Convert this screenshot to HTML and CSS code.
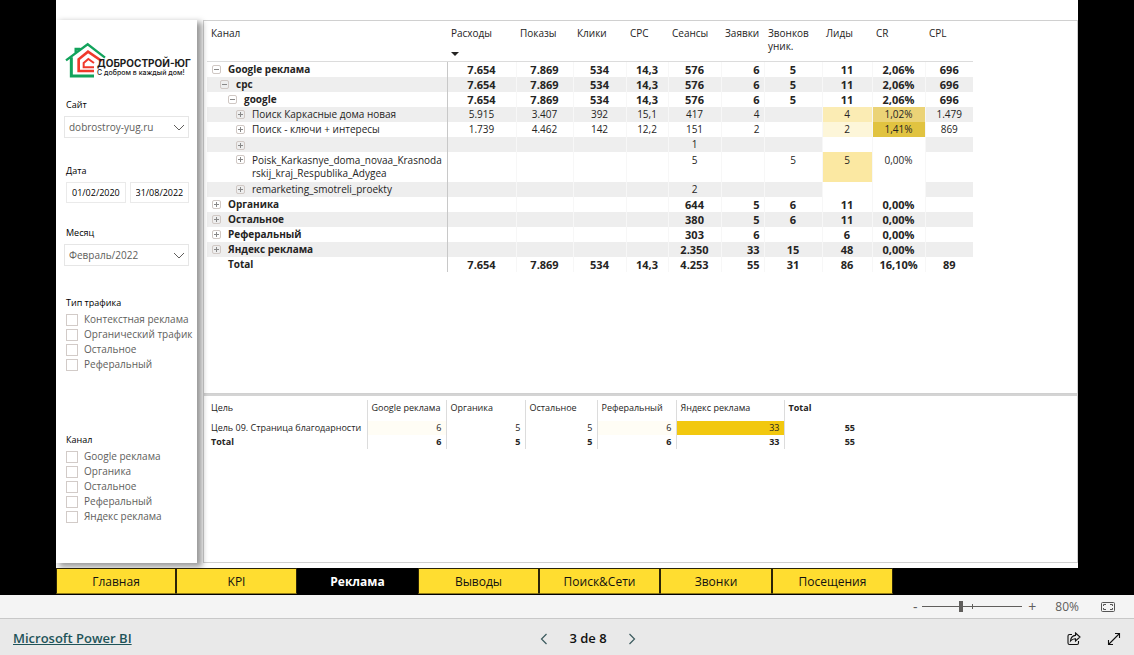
FILE: index.html
```html
<!DOCTYPE html>
<html lang="ru">
<head>
<meta charset="utf-8">
<title>Microsoft Power BI</title>
<link rel="stylesheet" href="styles.css">
</head>
<body>
<main class="stage">
  <div class="report">
    <div class="board">
      <aside class="sidebar">
        <div class="logo">
          <svg class="logo-mark" viewBox="28 124 126 108" aria-hidden="true">
            <g fill="none" stroke-width="7">
              <path stroke="#12a35c" d="M31 179 96 131 148 171M60 156V145H74"/>
              <path stroke="#12a35c" stroke-width="9" d="M47 170V226H115"/>
              <path stroke="#f0392b" stroke-width="8" d="M138 181 97 153 69 176V211H115"/>
              <path stroke="#f0392b" stroke-width="6" d="M115 187 98 175 84 187V200H115"/>
            </g>
          </svg>
          <div class="logo-words">
            <strong class="logo-name">ДОБРОСТРОЙ-ЮГ</strong>
            <span class="logo-line">С добром в каждый дом!</span>
          </div>
        </div>

        <div class="slicer slicer-site">
          <label class="slicer-label" for="site">Сайт</label>
          <select class="picker" id="site"><option>dobrostroy-yug.ru</option></select>
        </div>

        <div class="slicer slicer-date">
          <label class="slicer-label" for="from">Дата</label>
          <div class="dates">
            <input class="date" id="from" type="text" value="01/02/2020">
            <input class="date" id="to" type="text" value="31/08/2022" aria-label="Дата, конец">
          </div>
        </div>

        <div class="slicer slicer-month">
          <label class="slicer-label" for="month">Месяц</label>
          <select class="picker" id="month"><option>Февраль/2022</option></select>
        </div>

        <fieldset class="slicer slicer-traffic">
          <legend class="slicer-label">Тип трафика</legend>
          <label class="choice"><input type="checkbox">Контекстная реклама</label>
          <label class="choice"><input type="checkbox">Органический трафик</label>
          <label class="choice"><input type="checkbox">Остальное</label>
          <label class="choice"><input type="checkbox">Реферальный</label>
        </fieldset>

        <fieldset class="slicer slicer-channel">
          <legend class="slicer-label">Канал</legend>
          <label class="choice"><input type="checkbox">Google реклама</label>
          <label class="choice"><input type="checkbox">Органика</label>
          <label class="choice"><input type="checkbox">Остальное</label>
          <label class="choice"><input type="checkbox">Реферальный</label>
          <label class="choice"><input type="checkbox">Яндекс реклама</label>
        </fieldset>
      </aside>

      <div class="panels">
        <section class="panel panel-main">
          <table class="matrix">
            <colgroup>
              <col class="w-name"><col class="w-cost"><col class="w-shows"><col class="w-clicks"><col class="w-cpc"><col class="w-visits"><col class="w-orders"><col class="w-calls"><col class="w-leads"><col class="w-cr"><col class="w-cpl">
            </colgroup>
            <thead>
              <tr><th>Канал</th><th><span class="sorted">Расходы</span></th><th>Показы</th><th>Клики</th><th>CPC</th><th>Сеансы</th><th>Заявки</th><th>Звонков уник.</th><th>Лиды</th><th>CR</th><th>CPL</th></tr>
            </thead>
            <tbody>
              <tr class="bold"><th><div class="node"><button class="toggle minus" aria-label="Свернуть"></button><span>Google реклама</span></div></th><td>7.654</td><td>7.869</td><td>534</td><td>14,3</td><td>576</td><td>6</td><td>5</td><td>11</td><td>2,06%</td><td>696</td></tr>
              <tr class="bold"><th><div class="node l1"><button class="toggle minus" aria-label="Свернуть"></button><span>cpc</span></div></th><td>7.654</td><td>7.869</td><td>534</td><td>14,3</td><td>576</td><td>6</td><td>5</td><td>11</td><td>2,06%</td><td>696</td></tr>
              <tr class="bold"><th><div class="node l2"><button class="toggle minus" aria-label="Свернуть"></button><span>google</span></div></th><td>7.654</td><td>7.869</td><td>534</td><td>14,3</td><td>576</td><td>6</td><td>5</td><td>11</td><td>2,06%</td><td>696</td></tr>
              <tr><th><div class="node l3"><button class="toggle" aria-label="Развернуть"></button><span>Поиск Каркасные дома новая</span></div></th><td>5.915</td><td>3.407</td><td>392</td><td>15,1</td><td>417</td><td>4</td><td></td><td class="heat-2">4</td><td class="heat-4">1,02%</td><td>1.479</td></tr>
              <tr><th><div class="node l3"><button class="toggle" aria-label="Развернуть"></button><span>Поиск - ключи + интересы</span></div></th><td>1.739</td><td>4.462</td><td>142</td><td>12,2</td><td>151</td><td>2</td><td></td><td class="heat-1">2</td><td class="heat-5">1,41%</td><td>869</td></tr>
              <tr><th><div class="node l3"><button class="toggle" aria-label="Развернуть"></button></div></th><td></td><td></td><td></td><td></td><td>1</td><td></td><td></td><td class="heat-0"></td><td class="heat-0"></td><td></td></tr>
              <tr class="tall"><th><div class="node l3"><button class="toggle" aria-label="Развернуть"></button><span>Poisk_Karkasnye_doma_novaa_Krasnoda<br>rskij_kraj_Respublika_Adygea</span></div></th><td></td><td></td><td></td><td></td><td>5</td><td></td><td>5</td><td class="heat-3">5</td><td>0,00%</td><td></td></tr>
              <tr><th><div class="node l3"><button class="toggle" aria-label="Развернуть"></button><span>remarketing_smotreli_proekty</span></div></th><td></td><td></td><td></td><td></td><td>2</td><td></td><td></td><td class="heat-0"></td><td class="heat-0"></td><td></td></tr>
              <tr class="bold"><th><div class="node"><button class="toggle" aria-label="Развернуть"></button><span>Органика</span></div></th><td></td><td></td><td></td><td></td><td>644</td><td>5</td><td>6</td><td>11</td><td>0,00%</td><td></td></tr>
              <tr class="bold"><th><div class="node"><button class="toggle" aria-label="Развернуть"></button><span>Остальное</span></div></th><td></td><td></td><td></td><td></td><td>380</td><td>5</td><td>6</td><td>11</td><td>0,00%</td><td></td></tr>
              <tr class="bold"><th><div class="node"><button class="toggle" aria-label="Развернуть"></button><span>Реферальный</span></div></th><td></td><td></td><td></td><td></td><td>303</td><td>6</td><td></td><td>6</td><td>0,00%</td><td></td></tr>
              <tr class="bold"><th><div class="node"><button class="toggle" aria-label="Развернуть"></button><span>Яндекс реклама</span></div></th><td></td><td></td><td></td><td></td><td>2.350</td><td>33</td><td>15</td><td>48</td><td>0,00%</td><td></td></tr>
              <tr class="bold"><th><div class="node total"><span>Total</span></div></th><td>7.654</td><td>7.869</td><td>534</td><td>14,3</td><td>4.253</td><td>55</td><td>31</td><td>86</td><td>16,10%</td><td>89</td></tr>
            </tbody>
          </table>
        </section>

        <section class="panel panel-goals">
          <table class="goals">
            <colgroup><col class="g-name"><col class="g-google"><col class="g-organic"><col class="g-other"><col class="g-referral"><col class="g-yandex"><col class="g-total"></colgroup>
            <thead>
              <tr><th>Цель</th><th>Google реклама</th><th>Органика</th><th>Остальное</th><th>Реферальный</th><th>Яндекс реклама</th><th class="strong">Total</th></tr>
            </thead>
            <tbody>
              <tr><th>Цель 09. Страница благодарности</th><td class="faint">6</td><td>5</td><td>5</td><td class="faint">6</td><td class="gold">33</td><td class="strong">55</td></tr>
              <tr class="bold"><th>Total</th><td>6</td><td>5</td><td>5</td><td>6</td><td>33</td><td>55</td></tr>
            </tbody>
          </table>
        </section>
      </div>
    </div>

    <nav class="tabs">
      <button class="tab">Главная</button>
      <button class="tab">KPI</button>
      <button class="tab active">Реклама</button>
      <button class="tab">Выводы</button>
      <button class="tab">Поиск&amp;Сети</button>
      <button class="tab">Звонки</button>
      <button class="tab">Посещения</button>
    </nav>
  </div>
</main>

<div class="zoombar">
  <button class="zoom-step" aria-label="Уменьшить">-</button>
  <input class="zoom-range" type="range" min="0" max="100" value="38" aria-label="Масштаб">
  <button class="zoom-step" aria-label="Увеличить">+</button>
  <span class="zoom-value">80%</span>
  <button class="icon-button" aria-label="По размеру страницы">
    <svg width="14" height="10" viewBox="0 0 14 10" fill="none" stroke="#555"><rect x=".5" y=".5" width="13" height="9" rx="1"/><path d="M5 2.500H2.500V4M9 2.500h2.500V4M5 7.500H2.500V6M9 7.500h2.500V6"/></svg>
  </button>
</div>

<footer class="footer">
  <a class="brand" href="#">Microsoft Power BI</a>
  <div class="pager">
    <button class="icon-button" aria-label="Назад"><svg width="8" height="12" viewBox="0 0 8 12" fill="none" stroke="#3b5a5e" stroke-width="1.200"><path d="M6.500 1 1.500 6l5 5"/></svg></button>
    <span class="pages">3 de 8</span>
    <button class="icon-button" aria-label="Вперёд"><svg width="8" height="12" viewBox="0 0 8 12" fill="none" stroke="#3b5a5e" stroke-width="1.200"><path d="M1.500 1l5 5-5 5"/></svg></button>
  </div>
  <div class="actions">
    <button class="icon-button" aria-label="Поделиться"><svg width="14" height="14" viewBox="0 0 14 14" fill="none" stroke="#111" stroke-width="1.100"><path d="M5 2.500H2.500Q1 2.500 1 4v7q0 1.500 1.500 1.500h7.500q1.500 0 1.500-1.500V9"/><path d="M8.500 1 13 5 8.500 9V6.700Q5.500 6.500 3.500 9 4 3.800 8.500 3.400Z"/></svg></button>
    <button class="icon-button" aria-label="Полный экран"><svg width="14" height="14" viewBox="0 0 14 14" fill="none" stroke="#111" stroke-width="1.100"><path d="M1.500 12.500 12.500 1.500M8 1.500h4.500V6M1.500 8v4.500H6"/></svg></button>
  </div>
</footer>
</body>
</html>
```

FILE: styles.css
```css
* { box-sizing: border-box; }

body {
  margin: 0;
  min-height: 100vh;
  display: flex;
  flex-direction: column;
  font-family: "Open Sans", "Noto Sans", sans-serif;
  font-size: 10px;
  line-height: 15px;
  color: #252423;
  background: #e9e9e9;
}

button, input, select { font: inherit; color: inherit; margin: 0; }
button { padding: 0; border: 0; background: none; cursor: pointer; }
svg { display: block; }

.stage {
  flex: 1;
  display: flex;
  padding: 0 56px;
  background: #000;
}

.report {
  flex: 1;
  min-width: 0;
  display: flex;
  flex-direction: column;
  padding-top: 20px;
  background: #fff;
}

.board {
  flex: 1;
  display: flex;
  gap: 6px;
  padding-bottom: 5px;
}

/* Sidebar */
.sidebar {
  position: relative;
  flex: none;
  width: 141px;
  padding: 20px 8px 0;
  background: #fff;
  box-shadow: 4px 3px 6px 1px rgba(0, 0, 0, .4);
  clip-path: inset(-6px -14px -5px 0);
}

.logo { display: flex; align-items: flex-end; height: 38px; padding-left: 1px; }
.logo-mark { flex: none; width: 42px; height: 36px; }
.logo-words {
  display: flex;
  flex-direction: column;
  margin-left: -10px;
  white-space: nowrap;
  color: #1c1c1c;
}
.logo-name { font: 700 10px/10px Inter, sans-serif; }
.logo-line { font: 500 7px/10px Inter, sans-serif; }

.slicer { min-width: 0; margin: 0; padding: 0; border: 0; }
.slicer-site { margin-top: 20px; }
.slicer-date { margin-top: 26px; }
.slicer-month { margin-top: 23px; }
.slicer-traffic { margin-top: 30px; }
.slicer-channel { margin-top: 61px; }

.slicer-label {
  display: block;
  padding: 0 2px;
  font-size: 9px;
  line-height: 14px;
  color: #000;
}

.picker {
  display: block;
  width: 100%;
  height: 22px;
  margin-top: 4px;
  padding: 0 4px;
  border: 1px solid #e6e6e6;
  border-radius: 0;
  color: #605e5c;
  appearance: none;
  background: #fff url("data:image/svg+xml,%3Csvg xmlns='http://www.w3.org/2000/svg' width='12' height='7' fill='none' stroke='%23605e5c'%3E%3Cpath d='M1 1l5 5 5-5'/%3E%3C/svg%3E") no-repeat right 3px center;
}

.dates { display: flex; gap: 4px; margin: 4px 0 0 2px; }
.date {
  flex: 1;
  min-width: 0;
  height: 21px;
  padding: 0 3px 0 5px;
  border: 1px solid #eaeaea;
  font-size: 9px;
  color: #000;
}

.choice {
  display: flex;
  align-items: center;
  gap: 6px;
  height: 15px;
  padding-left: 2px;
  white-space: nowrap;
  color: #605e5c;
}
.slicer-label + .choice { margin-top: 2px; }
.choice input {
  flex: none;
  appearance: none;
  width: 12px;
  height: 12px;
  border: 1px solid #d2cbc8;
  background: #fff;
}

/* Panels */
.panels { flex: 1; min-width: 0; display: flex; flex-direction: column; }
.panel { border: 1px solid #d0d0d0; }
.panel-main { flex: 377; padding: 3px 3px 0; }
.panel-goals { flex: 166; padding: 4px 3px 0; border-top: 2px solid #d4d4d4; }

table { border-collapse: collapse; table-layout: fixed; }
th { font-weight: 400; text-align: left; }
.bold th, .bold td, .strong { font-weight: 700; }

.matrix { width: 766px; }
.w-name { width: 240px; }
.w-cost { width: 69px; }
.w-shows { width: 57px; }
.w-clicks, .w-visits, .w-cr { width: 53px; }
.w-cpc { width: 42px; }
.w-orders { width: 43px; }
.w-calls { width: 58px; }
.w-leads { width: 50px; }
.w-cpl { width: 48px; }

.matrix thead th {
  height: 37px;
  padding: 3px 0 0 4px;
  border-bottom: 1px solid #dcdcdc;
  vertical-align: top;
  line-height: 13px;
}
.sorted { display: block; }
.sorted::after {
  content: "";
  display: block;
  width: 0;
  margin-top: 12px;
  border: 4px solid transparent;
  border-top-color: #252423;
  border-bottom: 0;
}
.matrix tbody th, .matrix td { height: 15px; padding: 0; }
.matrix tbody th { border-right: 1px solid #c8c8c8; }
.matrix td { text-align: center; border-left: 1px solid #f7f7f7; }
.matrix .bold td { font-size: 11px; }
.matrix td:nth-child(7) { text-align: right; padding-right: 4px; }
.matrix tbody tr:nth-child(even) { background: #eee; }
.matrix .tall th, .matrix .tall td { height: 30px; padding-top: 2px; vertical-align: top; line-height: 13px; }

.node { display: flex; gap: 8px; padding-left: 5px; white-space: nowrap; }
.l1 { padding-left: 13px; }
.l2 { padding-left: 21px; }
.l3 { padding-left: 29px; }
.total { padding-left: 21px; }

.toggle {
  flex: none;
  width: 9px;
  height: 9px;
  margin: 3px -1px 0 0;
  border: 1px solid #d0c8c4;
  border-radius: 2px;
  background:
    linear-gradient(#888, #888) center / 5px 1px no-repeat,
    linear-gradient(#888, #888) center / 1px 5px no-repeat;
}
.toggle.minus { background: linear-gradient(#888, #888) center / 5px 1px no-repeat; }
.tall .toggle { margin-top: 1px; }

.heat-0 { background: #fff; }
.heat-1 { background: #fdf6d9; }
.heat-2 { background: #fbecb4; }
.heat-3 { background: #fbe8a2; }
.heat-4 { background: #ebd377; }
.heat-5 { background: #e1c340; }

.goals { width: 652px; font-size: 9px; line-height: 14px; }
.g-name { width: 160px; }
.g-google { width: 79px; }
.g-organic { width: 79px; }
.g-other { width: 72px; }
.g-referral { width: 79px; }
.g-yandex { width: 108px; }
.g-total { width: 75px; }
.goals th, .goals td { height: 14px; padding: 0 4px; white-space: nowrap; }
.goals thead th { height: 21px; padding-bottom: 5px; }
.goals td { text-align: right; }
.goals tr > * + * { border-left: 1px solid #dcdcdc; }
.faint { background: #fffdf5; }
.gold { background: #f2c80f; }

/* Page tabs */
.tabs {
  display: grid;
  grid-template-columns: 120fr 121fr 121fr 121fr 121fr 112fr 121fr 185fr;
  height: 27px;
  padding-bottom: 1px;
  background: #000;
}
.tab {
  border: 1px solid #2b2408;
  border-bottom-color: #8f7a17;
  background: #ffdd30;
  font-size: 12px;
  color: #111;
}
.tab.active { border-color: #000; background: #000; color: #fff; font-weight: 700; }

/* Zoom bar */
.zoombar {
  display: flex;
  align-items: center;
  justify-content: flex-end;
  height: 23px;
  padding-right: 19px;
  background: #f4f4f4;
  color: #605e5c;
}
.zoom-step { width: 8px; font-size: 14px; }
.zoom-range {
  appearance: none;
  width: 100px;
  height: 12px;
  margin: 0 6px 0 3px;
  background:
    linear-gradient(#605e5c, #605e5c) center / 100% 1px no-repeat,
    linear-gradient(#605e5c, #605e5c) 50px center / 1px 5px no-repeat;
}
.zoom-range::-webkit-slider-thumb {
  appearance: none;
  width: 4px;
  height: 11px;
  background: #605e5c;
}
.zoom-value { margin: 0 22px 0 19px; font-size: 12px; }

/* Footer */
.footer {
  display: grid;
  grid-template-columns: 1fr auto 1fr;
  align-items: center;
  height: 37px;
  padding: 3px 13px 0;
  border-top: 1px solid #c8c8c8;
  color: #111;
}
.brand { justify-self: start; font-size: 13px; font-weight: 600; color: #1f5459; }
.pager { display: flex; align-items: center; gap: 21px; margin-left: 42px; }
.pages { font-size: 13px; font-weight: 600; }
.actions { display: flex; justify-content: flex-end; gap: 26px; }
```
